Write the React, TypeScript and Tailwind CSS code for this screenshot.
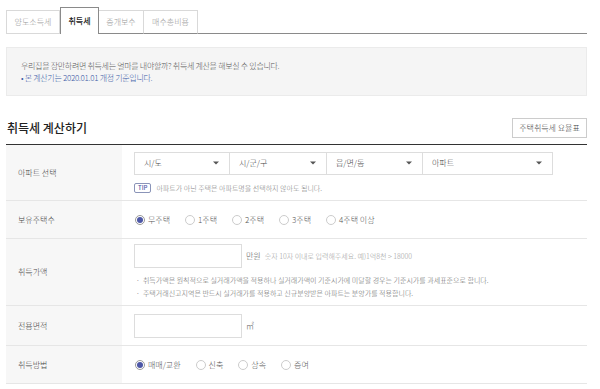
import React from 'react';

const font = { fontFamily: '"Noto Sans CJK KR", "Noto Sans", sans-serif' };

function Caret() {
    return (
        <svg width="6" height="4" viewBox="0 0 6 4" className="shrink-0">
            <path d="M0 0.5 L6 0.5 L3 3.5 Z" fill="#555" />
        </svg>
    );
}

function Select({ label, width }: { label: string; width: string }) {
    return (
        <div className={`${width} h-[23px] flex items-center justify-between pl-[9px] pr-[10px] border border-[#ddd] -ml-px first:ml-0 bg-white`}>
            <span className="text-[8px] text-[#444]">{label}</span>
            <Caret />
        </div>
    );
}

function Radio({ label, checked, className = '' }: { label: string; checked?: boolean; className?: string }) {
    return (
        <label className={`flex items-center gap-[3px] ${className}`}>
            <span className={`w-[10px] h-[10px] rounded-full border flex items-center justify-center ${checked ? 'border-[#999]' : 'border-[#ccc]'}`}>
                {checked && <span className="w-[6px] h-[6px] rounded-full bg-[#4d57a6]" />}
            </span>
            <span className="text-[8px] text-[#555]">{label}</span>
        </label>
    );
}

function Row({ label, children, h }: { label: string; children: React.ReactNode; h: string }) {
    return (
        <div className={`flex ${h} border-b border-[#e6e6e6]`}>
            <div className="w-[116px] shrink-0 bg-[#f7f7f7] flex items-center pl-[12px] text-[8px] text-[#444]">{label}</div>
            <div className="flex-1 pl-[12px] flex flex-col justify-center">{children}</div>
        </div>
    );
}

export default function App() {
    const tabs = ['양도소득세', '취득세', '중개보수', '매수총비용'];

    return (
        <div className="w-[600px] h-[389px] bg-white overflow-hidden pl-[6px] pr-[13px] pt-[7px] font-light" style={font}>
            {/* Tabs */}
            <div className="flex items-end h-[27px]">
                <div className="w-[54px] h-[24px] border border-[#d9d9d9] flex items-center justify-center text-[8px] text-[#999]">{tabs[0]}</div>
                <div className="w-[39px] h-[27px] border-x border-t border-[#8a8a8a] flex items-center justify-center text-[8px] text-[#222] font-medium">{tabs[1]}</div>
                <div className="w-[45px] h-[24px] border-t border-r border-[#d9d9d9] border-b border-b-[#8a8a8a] flex items-center justify-center text-[8px] text-[#999]">{tabs[2]}</div>
                <div className="w-[54px] h-[24px] border-t border-r border-[#d9d9d9] border-b border-b-[#8a8a8a] flex items-center justify-center text-[8px] text-[#999]">{tabs[3]}</div>
                <div className="flex-1 border-b border-[#8a8a8a]" />
            </div>

            {/* Info box */}
            <div className="mt-[13px] h-[49px] bg-[#f5f5f5] border border-[#ebebeb] pl-[14px] flex flex-col justify-center gap-[2px] tracking-[-0.3px]">
                <p className="text-[8px] text-[#555] leading-[10px]">우리집을 장만하려면 취득세는 얼마를 내야할까? 취득세 계산을 해보실 수 있습니다.</p>
                <p className="text-[8px] text-[#3a5aa6] leading-[10px]">• 본 계산기는 2020.01.01 개정 기준입니다.</p>
            </div>

            {/* Heading */}
            <div className="mt-[22px] flex items-center justify-between h-[20px]">
                <h2 className="text-[12px] font-medium text-[#222] pl-[1px]">취득세 계산하기</h2>
                <button className="h-[20px] w-[75px] border border-[#ccc] text-[8px] text-[#444] bg-white">주택취득세 요율표</button>
            </div>

            {/* Table */}
            <div className="mt-[6px] border-t border-[#333]">
                <Row label="아파트 선택" h="h-[56px]">
                    <div className="flex">
                        <Select label="시/도" width="w-[96px]" />
                        <Select label="시/군/구" width="w-[98px]" />
                        <Select label="읍/면/동" width="w-[97px]" />
                        <Select label="아파트" width="w-[131px]" />
                    </div>
                    <div className="flex items-center mt-[8px]">
                        <span className="h-[10px] px-[3px] border border-[#8a94b8] rounded-[2px] text-[6px] leading-[8px] text-[#4d57a6] font-medium">TIP</span>
                        <span className="ml-[5px] text-[7px] text-[#777]">아파트가 아닌 주택은 아파트명을 선택하지 않아도 됩니다.</span>
                    </div>
                </Row>
                <Row label="보유주택수" h="h-[38px]">
                    <div className="flex items-center pl-px">
                        <Radio label="무주택" checked className="mr-[15px]" />
                        <Radio label="1주택" className="mr-[15px]" />
                        <Radio label="2주택" className="mr-[15px]" />
                        <Radio label="3주택" className="mr-[15px]" />
                        <Radio label="4주택 이상" />
                    </div>
                </Row>
                <Row label="취득가액" h="h-[67px]">
                    <div className="flex items-center">
                        <div className="w-[108px] h-[24px] border border-[#ddd]" />
                        <span className="ml-[4px] text-[8px] text-[#555]">만원</span>
                        <span className="ml-[4px] text-[7px] text-[#999]">숫자 10자 이내로 입력해주세요. 예)1억8천 &gt; 18000</span>
                    </div>
                    <ul className="mt-[6px] pl-[2px] text-[7px] text-[#666] leading-[13px]">
                        <li>·&nbsp; 취득가액은 원칙적으로 실거래가액을 적용하나 실거래가액이 기준시가에 미달할 경우는 기준시가를 과세표준으로 합니다.</li>
                        <li>·&nbsp; 주택거래신고지역은 반드시 실거래가를 적용하고 신규분양받은 아파트는 분양가를 적용합니다.</li>
                    </ul>
                </Row>
                <Row label="전용면적" h="h-[40px]">
                    <div className="flex items-center">
                        <div className="w-[108px] h-[24px] border border-[#ddd]" />
                        <span className="ml-[4px] text-[8px] text-[#555]">㎡</span>
                    </div>
                </Row>
                <Row label="취득방법" h="h-[38px]">
                    <div className="flex items-center pl-px">
                        <Radio label="매매/교환" checked className="mr-[15px]" />
                        <Radio label="신축" className="mr-[15px]" />
                        <Radio label="상속" className="mr-[15px]" />
                        <Radio label="증여" />
                    </div>
                </Row>
            </div>
        </div>
    );
}
